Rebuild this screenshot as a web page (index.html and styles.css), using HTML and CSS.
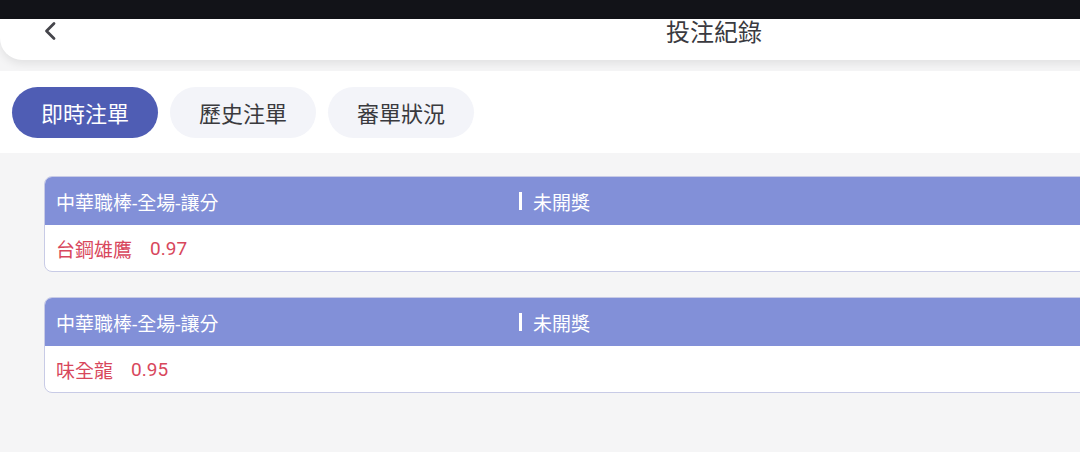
FILE: index.html
```html
<!DOCTYPE html>
<html lang="zh-Hant">
<head>
    <meta charset="UTF-8">
    <meta name="viewport" content="width=device-width, initial-scale=1.0">
    <title>投注紀錄</title>
    <link rel="stylesheet" href="styles.css">
</head>
<body>
    <div class="page">
        <div class="status-bar"></div>
        <header class="top-bar">
            <button class="back" aria-label="返回">
                <svg width="16" height="20" viewBox="0 0 16 20"><path d="M12 2.5 L4.5 10 L12 17.5" fill="none" stroke="#45454b" stroke-width="2.8" stroke-linecap="round" stroke-linejoin="round"/></svg>
            </button>
            <h1 class="title">投注紀錄</h1>
        </header>

        <nav class="tabs">
            <span class="tab active">即時注單</span>
            <span class="tab">歷史注單</span>
            <span class="tab">審單狀況</span>
        </nav>

        <main class="list">
            <div class="card">
                <div class="card-head">
                    <span class="league">中華職棒-全場-讓分</span>
                    <span class="status">未開獎</span>
                </div>
                <div class="card-body">
                    <span class="team">台鋼雄鷹</span>
                    <span class="odds">0.97</span>
                </div>
            </div>
            <div class="card">
                <div class="card-head">
                    <span class="league">中華職棒-全場-讓分</span>
                    <span class="status">未開獎</span>
                </div>
                <div class="card-body">
                    <span class="team">味全龍</span>
                    <span class="odds">0.95</span>
                </div>
            </div>
        </main>
    </div>
</body>
</html>
```

FILE: styles.css
```css
html, body {
    margin: 0;
    padding: 0;
    overflow: hidden;
}
body {
    font-family: Roboto, "Noto Sans CJK TC", sans-serif;
    background-color: #f5f5f6;
}
.page {
    width: 1428px;
    height: 452px;
    background-color: #f5f5f6;
}
.status-bar {
    height: 19px;
    background-color: #121318;
}
.top-bar {
    position: relative;
    height: 41px;
    background-color: #fff;
    border-bottom-left-radius: 22px;
    border-bottom-right-radius: 22px;
    box-shadow: 0 4px 8px rgba(0, 0, 0, 0.08);
    display: flex;
    align-items: center;
    justify-content: center;
    z-index: 2;
}
.back {
    position: absolute;
    left: 42px;
    top: 2px;
    border: none;
    background: none;
    padding: 0;
    display: flex;
}
.title {
    margin: 0;
    margin-top: -14px;
    font-size: 24px;
    font-weight: 400;
    color: #3a3a40;
    line-height: 1;
}
.tabs {
    margin-top: 11px;
    height: 82px;
    background-color: #fff;
    display: flex;
    align-items: center;
    gap: 12px;
    padding-left: 12px;
}
.tab {
    width: 146px;
    height: 51px;
    border-radius: 26px;
    background-color: #f3f4f9;
    color: #3a3a3e;
    font-size: 22px;
    display: flex;
    align-items: center;
    justify-content: center;
}
.tab.active {
    background-color: #4f5db4;
    color: #fff;
}
.list {
    padding: 23px 44px 0;
    display: flex;
    flex-direction: column;
    gap: 25px;
}
.card {
    border: 1px solid #c8cbe6;
    border-radius: 8px;
    overflow: hidden;
    background-color: #fff;
}
.card-head {
    height: 48px;
    background-color: #8290d8;
    color: #fff;
    font-size: 19px;
    display: grid;
    grid-template-columns: 463px 1fr;
    align-items: center;
    padding-left: 11px;
}
.status {
    display: flex;
    align-items: center;
}
.status::before {
    content: "";
    width: 3px;
    height: 18px;
    background-color: #fff;
    margin-right: 11px;
}
.card-body {
    height: 46px;
    display: flex;
    align-items: center;
    padding-left: 11px;
    color: #d8475c;
    font-size: 19px;
}
.odds {
    margin-left: 18px;
}
```
